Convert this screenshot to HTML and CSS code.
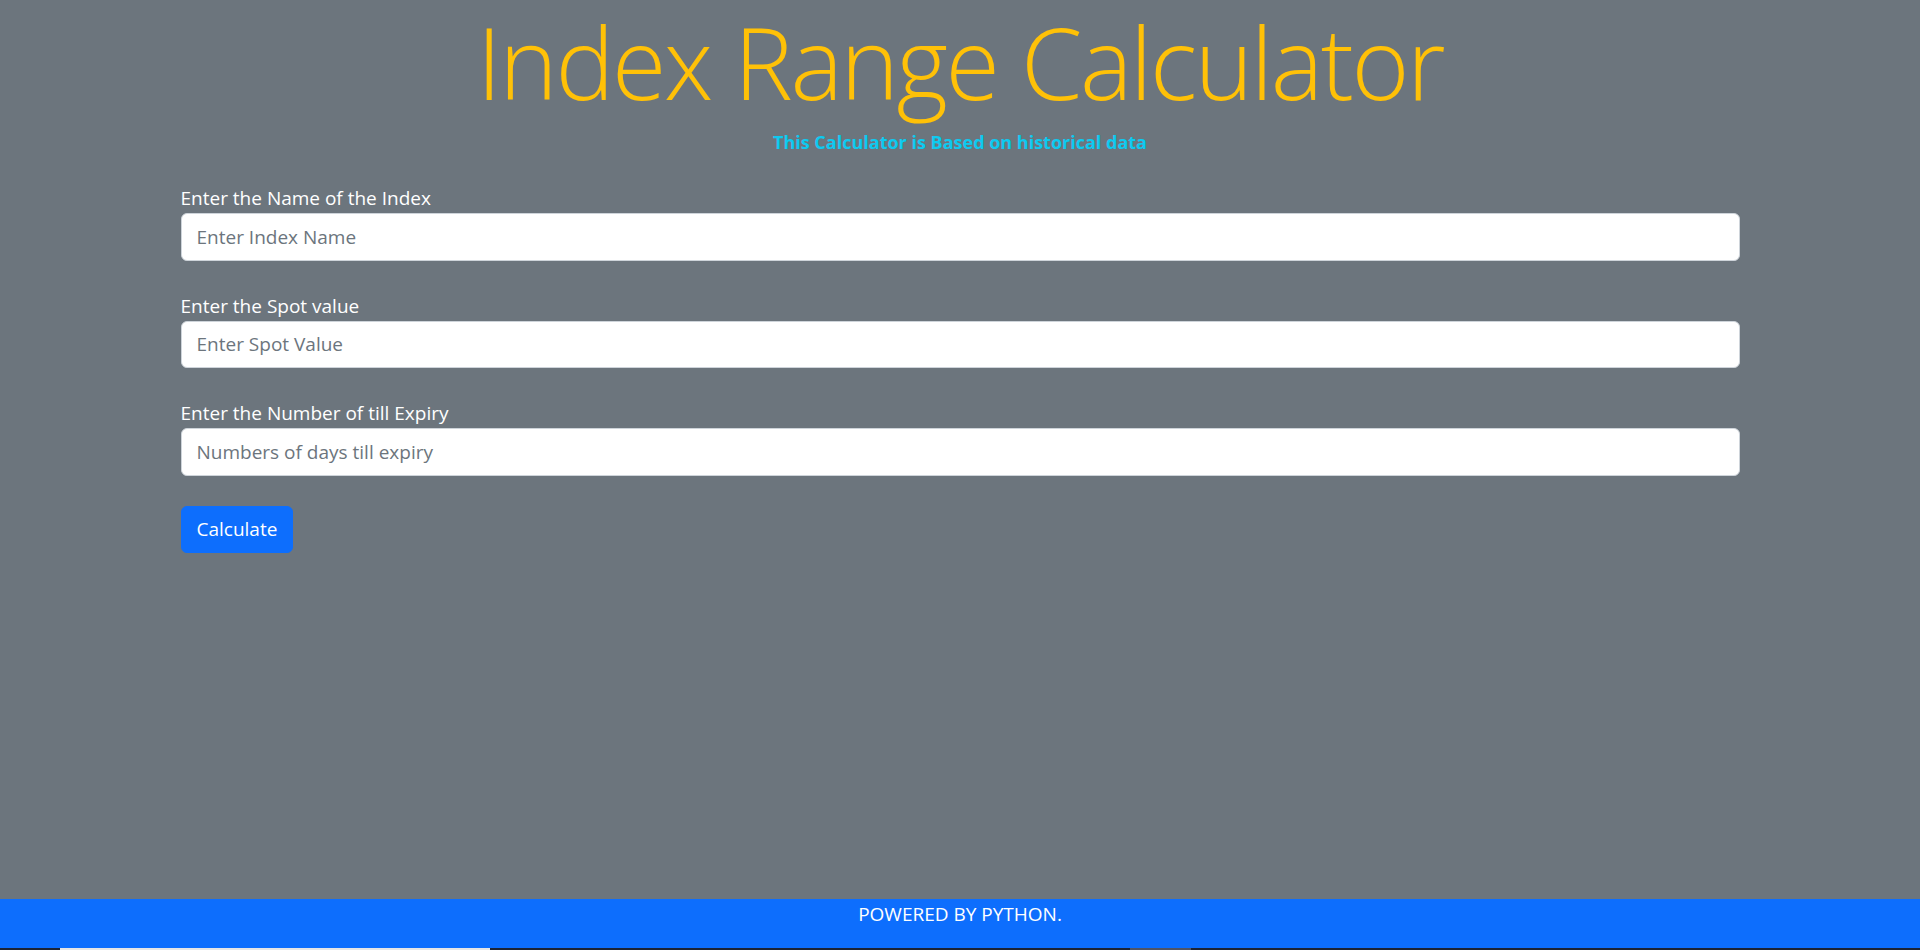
FILE: index.html
```html
<!DOCTYPE html>
<html lang="en">
<head>
<meta charset="utf-8">
<title>Index Range Calculator</title>
<link rel="stylesheet" href="styles.css">
</head>
<body>
<main class="page">
  <h1 class="title">Index Range Calculator</h1>
  <p class="subtitle">This Calculator is Based on historical data</p>
  <form class="form">
    <div class="field">
      <label class="label" for="idx">Enter the Name of the Index</label>
      <input class="input" id="idx" type="text" placeholder="Enter Index Name">
    </div>
    <div class="field">
      <label class="label" for="spot">Enter the Spot value</label>
      <input class="input" id="spot" type="text" placeholder="Enter Spot Value">
    </div>
    <div class="field">
      <label class="label" for="days">Enter the Number of till Expiry</label>
      <input class="input" id="days" type="text" placeholder="Numbers of days till expiry">
    </div>
    <button class="btn" type="button">Calculate</button>
  </form>
</main>
<footer class="footer">
  <p class="footer-text">POWERED BY PYTHON.</p>
</footer>
<div class="taskbar">
  <span class="seg seg-dark-a"></span>
  <span class="seg seg-light"></span>
  <span class="seg seg-dark-b"></span>
  <span class="seg seg-gray"></span>
  <span class="seg seg-dark-c"></span>
</div>
</body>
</html>
```

FILE: styles.css
```css
* { box-sizing: border-box; }
html, body { margin: 0; padding: 0; }
body {
  height: 950px;
  display: flex;
  flex-direction: column;
  background: #6c757d;
  color: #ffffff;
  font-family: "Open Sans", "Noto Sans", sans-serif;
  font-size: 20px;
  line-height: 30px;
  overflow: hidden;
}
.page {
  flex: 1;
  display: flex;
  flex-direction: column;
  align-items: center;
}
.title {
  margin: 0;
  font-size: 99px;
  font-weight: 300;
  line-height: 124px;
  color: #ffc107;
  letter-spacing: -2.4px;
  white-space: nowrap;
}
.subtitle {
  margin: 3px 0 0;
  font-size: 18px;
  font-weight: 700;
  color: #0dcaf0;
}
.form {
  width: 1559px;
  margin-top: 26px;
  display: flex;
  flex-direction: column;
  align-items: flex-start;
}
.field {
  width: 100%;
  display: flex;
  flex-direction: column;
  margin-bottom: 30px;
}
.label {
  font-size: 19px;
  line-height: 30px;
}
.input {
  width: 100%;
  height: 47.5px;
  padding: 7px 15px;
  border: 1.25px solid #ced4da;
  border-radius: 6px;
  background: #fff;
  color: #212529;
  font-family: inherit;
  font-size: 19px;
  line-height: 30px;
}
.input::placeholder { color: #6c757d; opacity: 1; }
.btn {
  height: 47.5px;
  padding: 7px 15px;
  border: 1.25px solid #0d6efd;
  border-radius: 6px;
  background: #0d6efd;
  color: #fff;
  font-family: inherit;
  font-size: 19px;
  line-height: 30px;
}
.footer {
  height: 49px;
  background: #0d6efd;
  text-align: center;
}
.footer-text {
  margin: 0;
  font-size: 19px;
  line-height: 30px;
}
.taskbar {
  height: 2px;
  display: flex;
  background: #1c2434;
}
.seg { display: block; height: 2px; }
.seg-dark-a { width: 60px; }
.seg-light { width: 430px; background: #e6e6e6; }
.seg-dark-b { width: 640px; }
.seg-gray { width: 61px; background: #4f5566; }
.seg-dark-c { flex: 1; }
```
